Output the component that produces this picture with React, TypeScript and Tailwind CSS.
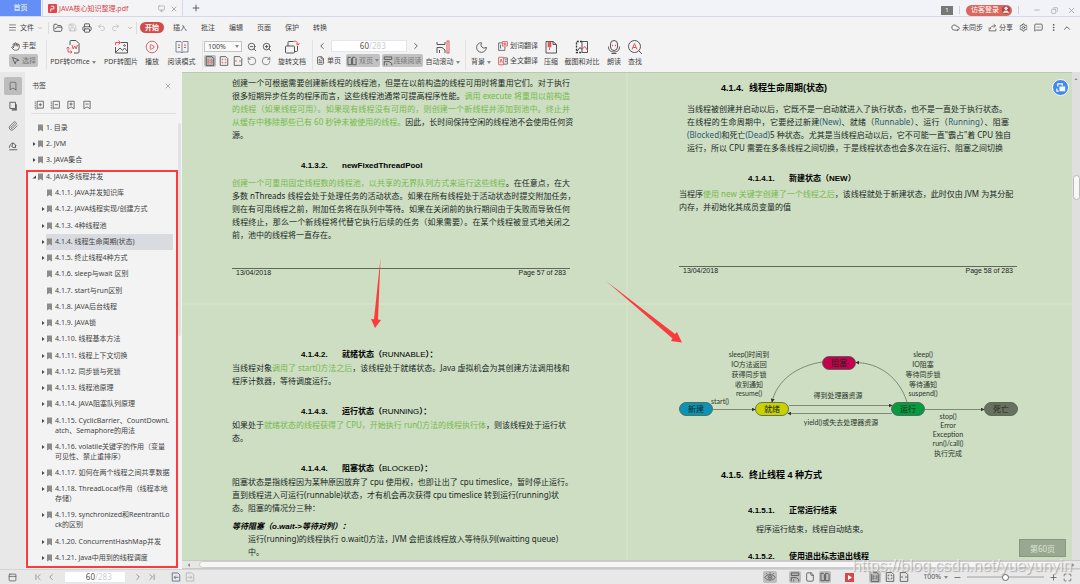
import { useState, type ReactNode } from 'react';
import {
  Bookmark,
  ChevronDown,
  ChevronFirst,
  ChevronLast,
  ChevronLeft,
  ChevronRight,
  ChevronUp,
  CirclePlay,
  Cloud,
  Copy,
  File,
  FileText,
  FolderOpen,
  Hand,
  Maximize,
  Menu,
  MessageSquareMore,
  Minus,
  Monitor,
  Moon,
  MoreVertical,
  MousePointer2,
  Paperclip,
  PanelTop,
  Plus,
  Printer,
  Redo2,
  RotateCcw,
  RotateCw,
  Save,
  Settings,
  Undo2,
  User,
  X,
  ZoomIn,
  ZoomOut,
} from 'lucide-react';
import clsx from 'clsx';

/* ---------- small drawings ---------- */

interface GlyphProps {
  className?: string;
  children: ReactNode;
}

function Glyph({ className = 'h-4 w-4', children }: GlyphProps) {
  return (
    <svg
      viewBox="0 0 16 16"
      className={clsx('shrink-0', className)}
      fill="none"
      stroke="#555"
      strokeWidth="1"
      aria-hidden="true"
    >
      {children}
    </svg>
  );
}

const RED = '#e0575b';

const PdfToOffice = () => (
  <Glyph>
    <path d="M5 6V2.500a1 1 0 0 1 1-1h5l3 3V13a1 1 0 0 1-1 1H9" />
    <path d="M7 6l1.200 4L9.700 7l1.500 3L12.400 6" stroke={RED} />
    <path d="M3 8v5h4M5.500 11.500L7 13l-1.500 1.500M1.500 9.500L3 8l1.500 1.500" stroke={RED} />
  </Glyph>
);

const PdfToImage = () => (
  <Glyph>
    <path d="M8 3.500h6.500V14h-12V8" />
    <path d="M3 13l4-4 2.500 2.500L11.500 9l3 3.500" />
    <circle cx="11.500" cy="6.500" r="0.800" />
    <path d="M2.500 6V3.500H7M5.500 1.500l2 2-2 2" stroke={RED} />
  </Glyph>
);

const ReadMode = () => (
  <Glyph>
    <path d="M2 2.500h5l1 1 1-1h5v10.500H9l-1 1-1-1H2zM8 3.500V14" stroke="#7886a0" />
    <path d="M4 6h2M4 8.500h2M10 6h2M10 8.500h2" stroke={RED} />
  </Glyph>
);

const RotateDoc = () => (
  <Glyph>
    <rect x="1.500" y="7" width="9" height="7" rx="1" />
    <path d="M4 7V3.500a1 1 0 0 1 1-1h4M13.500 7v4.500a1 1 0 0 1-1 1h-2" />
    <path d="M9 2.500c3-1 5 .5 5 3.500M12 4.500l2 1.800 1.500-2" stroke={RED} />
  </Glyph>
);

const AutoScroll = () => (
  <Glyph>
    <path d="M2 3v2.500h8V3M2 14V8.500h5l3 2.500v3M4.500 11v3" />
    <rect x="12" y="2" width="2" height="12" stroke={RED} />
  </Glyph>
);

const Compress = () => (
  <Glyph>
    <path d="M3 2.500h7l3.500 3V14H3z" />
    <path d="M10 2.500v3h3.500" />
    <rect x="5" y="3" width="3" height="5" fill={RED} stroke={RED} strokeWidth="0.600" />
    <path d="M6.500 8.500v2.500" stroke={RED} />
  </Glyph>
);

const Compare = () => (
  <Glyph>
    <path d="M8 2.500H2.500v11H8" strokeDasharray="2 1.200" strokeWidth="1.300" stroke="#333" />
    <path d="M8 2.500h5.500v11H8z" />
    <path d="M3 12l3-3.500 2 2" stroke="#333" />
    <path d="M8 10l3-2.500 2.500 4" stroke={RED} />
  </Glyph>
);

const ReadAloud = () => (
  <Glyph>
    <rect x="4.500" y="1.500" width="7" height="10" rx="3.500" />
    <path d="M2.500 7.500c0 4 2 5.500 5.500 5.500s5.500-1.500 5.500-5.500M5.500 14.500h5" />
    <path d="M6 6.500h1M9 6.500h1" stroke={RED} strokeWidth="1.400" />
  </Glyph>
);

const FindText = () => (
  <Glyph>
    <circle cx="7.500" cy="7.500" r="6" />
    <path d="M12 12l3 3" />
    <path d="M5 10.500l2.500-6 2.500 6M6 8.500h3" stroke={RED} />
  </Glyph>
);

const WordTranslate = () => (
  <Glyph className="h-[10px] w-[10px]">
    <path d="M7 3H1v12h10V9M4 6v6" strokeWidth="1.300" />
    <path d="M7 1h8v7H7zM9.500 3.500h3v2h-3z" stroke={RED} strokeWidth="1.400" />
  </Glyph>
);

const FullTranslate = () => (
  <Glyph className="h-[10px] w-[10px]">
    <path d="M9 3h6v10H9M11 6h3M11 9h3" strokeWidth="1.300" />
    <path d="M1 2h8v12H1zM3 11l2-6 2 6" stroke={RED} strokeWidth="1.400" />
  </Glyph>
);

const Continuous = () => (
  <Glyph className="h-[10px] w-[10px]">
    <path d="M2 1.500h12v4H2zM2 15V9h8l4 3v3M6 12v3" strokeWidth="1.500" />
  </Glyph>
);

const TwoPages = () => (
  <Glyph className="h-[10px] w-[10px]">
    <path d="M1.500 2H5l2 2v10H1.500zM9 2h3.500l2 2v10H9z" strokeWidth="1.500" />
  </Glyph>
);

const Pages = () => (
  <Glyph className="h-[10px] w-[10px]">
    <path d="M3 2h9v10H3z" strokeWidth="1.400" />
    <path d="M13 5v9H6" strokeWidth="2" />
  </Glyph>
);

const EyeCare = () => (
  <Glyph className="h-3 w-3">
    <path d="M1 8.500c3-5 11-5 14 0-3 5-11 5-14 0zM3 3l1.500 1.500M8 1.500v2M13 3l-1.500 1.500" />
    <circle cx="8" cy="8.500" r="2.500" />
    <circle cx="8" cy="8.500" r="0.800" />
  </Glyph>
);

const ShareArrow = () => (
  <Glyph className="h-[9px] w-[9px]">
    <path d="M2 8v6h12v-4M4 11c0-4 3-6 9-6M10 2l3.500 3L10 8" strokeWidth="1.400" />
  </Glyph>
);

function ViewArrow({ back }: { back?: boolean }) {
  return (
    <svg
      viewBox="0 0 16 16"
      className="h-[10px] w-[10px]"
      fill="none"
      stroke={back ? '#5f6d8c' : '#b4b4b4'}
      strokeWidth="1.400"
      aria-hidden="true"
    >
      <path d="M2 1.500h9l3 3v10H2z" />
      <path d={back ? 'M12 8.500H5M7.500 6L5 8.500 7.500 11' : 'M4 8.500h7M8.500 6L11 8.500 8.500 11'} />
    </svg>
  );
}

interface FitPageProps {
  kind: 'actual' | 'page' | 'width';
  accent?: string;
}

function FitPage({ kind, accent = '#555' }: FitPageProps) {
  return (
    <Glyph className="h-[10px] w-[10px]">
      <path d="M2 1h9l3 3v11H2z" strokeWidth="1.400" />
      {kind === 'actual' && <path d="M5 5v7M11 5v7M8 6v1.500M8 9.500V11" stroke={accent} strokeWidth="1.400" />}
      {kind === 'page' && <path d="M5 7V5h2M9 5h2v2M11 9v2H9M7 11H5V9" stroke={accent} strokeWidth="1.400" />}
      {kind === 'width' && <path d="M6 6L4 8l2 2M10 6l2 2-2 2" stroke={accent} strokeWidth="1.400" />}
    </Glyph>
  );
}

function BookmarkTool({ kind }: { kind: 'expand' | 'collapse' | 'add' | 'remove' }) {
  const tree = kind === 'expand' || kind === 'collapse';
  const plus = kind === 'expand' || kind === 'add';
  return (
    <Glyph className="h-[10px] w-[10px]">
      {tree ? (
        <>
          <path d="M5 2h10v11H5z" strokeWidth="1.300" />
          <path d="M2 2v12h4" strokeDasharray="2 1" strokeWidth="1.300" />
        </>
      ) : (
        <path d="M3 2h10v12l-5-3-5 3z" strokeWidth="1.300" />
      )}
      <path d={tree ? 'M7.500 7.500h5' : 'M5.500 6.500h5'} strokeWidth="1.300" />
      {plus && <path d={tree ? 'M10 5v5' : 'M8 4v5'} strokeWidth="1.300" />}
    </Glyph>
  );
}

const Caret = () => (
  <svg viewBox="0 0 4 3" className="h-[3px] w-1 shrink-0" fill="#888" aria-hidden="true">
    <path d="M0 0h4L2 3z" />
  </svg>
);

/* ---------- title bar and menu ---------- */

const menus = ['开始', '插入', '批注', '编辑', '页面', '保护', '转换'];

function TitleBar() {
  return (
    <header className="flex h-[17px] shrink-0 items-stretch border-b border-[#d3d9e8] bg-[#f2f3f8]">
      <button className="w-[41px] bg-[#6490f6] text-white">首页</button>
      <div className="ml-px flex w-[141px] items-center border-x border-[#d3d9e8] bg-[#f4f4f6] pt-px pr-1 pl-[5px]">
        <svg viewBox="0 0 10 10" className="mr-[2px] h-[9px] w-[9px]" aria-hidden="true">
          <rect width="10" height="10" rx="1" fill="#e0474c" />
          <path d="M3 8.500V5.500h3.500V2.500H3.500" stroke="#fff" fill="none" />
        </svg>
        <span className="flex-1 whitespace-nowrap text-[#d9444a]">JAVA核心知识整理.pdf</span>
        <Monitor className="h-[7px] w-[7px] text-[#999]" />
        <button aria-label="关闭标签" className="ml-[5px]">
          <X className="h-2 w-2 text-[#888]" />
        </button>
      </div>
      <button aria-label="新建标签" className="ml-2">
        <Plus className="h-[10px] w-[10px]" />
      </button>
      <div className="ml-auto flex items-center pt-[4px] pr-1 text-[#999]">
        <span className="h-[9px] w-3 bg-[#777] text-center text-[6px] leading-[9px] text-white">1</span>
        <span className="ml-[6px] h-2 w-px bg-[#d0d0d4]" />
        <button className="ml-[6px] flex h-[11px] items-center gap-[3px] rounded-full bg-[#d9685f] pr-[2px] pl-[5px] text-white">
          访客登录
          <User className="h-2 w-2 rounded-full bg-[#a84646]" fill="#f0cfcf" />
        </button>
        <span className="ml-[6px] h-2 w-px bg-[#d0d0d4]" />
        <button aria-label="最小化" className="ml-[14px]">
          <Minus className="h-2 w-2" />
        </button>
        <button aria-label="还原" className="ml-[10px]">
          <Copy className="h-[7px] w-[7px] -scale-x-100" />
        </button>
        <button aria-label="关闭" className="ml-[9px]">
          <X className="h-[9px] w-[9px]" />
        </button>
      </div>
    </header>
  );
}

function MenuBar() {
  return (
    <nav className="flex h-[21px] shrink-0 items-center pr-2 pl-2">
      <button className="flex w-[37px] items-center gap-[3px]">
        <Menu className="h-[9px] w-[9px] text-[#666]" />
        文件
        <ChevronDown className="h-[6px] w-[6px] text-[#888]" />
      </button>
      <span className="ml-[3px] h-3 w-px bg-[#dcdcdc]" />
      <div className="ml-[4px] flex items-center gap-[5px]">
        <button aria-label="打开"><FolderOpen className="h-[10px] w-[10px]" /></button>
        <button aria-label="保存"><Save className="h-[9px] w-[9px] text-[#bbb]" /></button>
        <button aria-label="打印"><Printer className="h-[10px] w-[10px]" /></button>
        <button aria-label="撤销"><Undo2 className="h-[9px] w-[9px] text-[#bbb]" /></button>
        <button aria-label="重做"><Redo2 className="h-[9px] w-[9px] text-[#bbb]" /></button>
        <button aria-label="更多" className="pl-[2px]"><ChevronDown className="h-[6px] w-[6px] text-[#777]" /></button>
      </div>
      <span className="ml-[3px] h-3 w-px bg-[#dcdcdc]" />
      <div className="ml-px flex">
        {menus.map((name, i) => (
          <button key={name} className="flex w-7 justify-center">
            {i === 0 ? (
              <span className="rounded-full bg-[#d34a4a] px-[5px] leading-[11px] font-bold text-white">{name}</span>
            ) : (
              <span className="leading-[11px]">{name}</span>
            )}
          </button>
        ))}
      </div>
      <div className="ml-auto flex items-center">
        <button className="flex items-center gap-[2px]"><Cloud className="h-[9px] w-[9px]" />未同步</button>
        <button className="ml-[5px] flex items-center gap-[2px]"><ShareArrow />分享</button>
        <button aria-label="设置" className="ml-[6px]"><Settings className="h-[9px] w-[9px]" /></button>
        <button aria-label="反馈" className="ml-[6px]"><MessageSquareMore className="h-[9px] w-[9px]" /></button>
        <button aria-label="更多选项" className="ml-[6px]"><MoreVertical className="h-[9px] w-[9px]" /></button>
        <button aria-label="收起功能区" className="ml-[4px]"><ChevronUp className="h-[10px] w-[10px]" /></button>
      </div>
    </nav>
  );
}

/* ---------- toolbar ---------- */

interface ToolProps {
  icon: ReactNode;
  label: string;
  width: string;
  caret?: boolean;
}

function Tool({ icon, label, width, caret }: ToolProps) {
  return (
    <button className={clsx('flex shrink-0 flex-col items-center gap-[2px] pt-px whitespace-nowrap', width)}>
      <span className="flex h-4 items-center">{icon}</span>
      <span className="flex items-center gap-[2px] leading-[10px]">
        {label}
        {caret && <Caret />}
      </span>
    </button>
  );
}

const Divider = () => <span className="h-[30px] w-px shrink-0 self-center bg-[#e2e2e2]" />;

function PageNumber({ id, className }: { id: string; className: string }) {
  const [page, setPage] = useState('60');
  return (
    <label htmlFor={id} className={clsx('flex items-center border border-[#e4e6ec] bg-white text-[8px]', className)}>
      <input
        id={id}
        aria-label="页码"
        value={page}
        onChange={(e) => setPage(e.target.value)}
        className="w-0 flex-1 text-right text-[#555] outline-none"
      />
      <span className="flex-1 text-[#ccc]">/283</span>
    </label>
  );
}

function Toolbar() {
  return (
    <div className="flex h-[34px] shrink-0 items-start pl-[9px] text-[#444]">
      <div className="flex w-[29px] shrink-0 flex-col gap-[2px] pt-[2px]">
        <button className="flex h-3 items-center gap-[2px] pl-[2px] whitespace-nowrap"><Hand className="h-[9px] w-[9px]" />手型</button>
        <button className="flex h-[13px] items-center gap-[2px] rounded-xs bg-[#c2c2c2] pl-[2px] whitespace-nowrap text-[#777]">
          <MousePointer2 className="h-[9px] w-[9px] text-[#444]" />选择
        </button>
      </div>
      <span className="w-2 shrink-0" />
      <Divider />
      <Tool width="w-[52px]" icon={<PdfToOffice />} label="PDF转Office" caret />
      <Tool width="w-11" icon={<PdfToImage />} label="PDF转图片" />
      <Tool width="w-[18px]" icon={<CirclePlay className="h-[14px] w-[14px] text-[#c85a5e]" strokeWidth={1.5} />} label="播放" />
      <Tool width="w-[41px]" icon={<ReadMode />} label="阅读模式" />
      <Divider />
      <div className="flex w-[69px] shrink-0 flex-col gap-[3px] pt-[3px] pl-px">
        <div className="flex items-center gap-[5px]">
          <span className="relative flex h-[11px] w-[39px] items-center border border-[#c4c4c4] bg-[#fafafa]">
            <select aria-label="缩放比例" className="w-full appearance-none pl-[3px] text-[7px] leading-[9px] outline-none" defaultValue="100%">
              <option>100%</option>
              <option>150%</option>
            </select>
            <span className="absolute right-[2px]"><Caret /></span>
          </span>
          <button aria-label="缩小"><ZoomOut className="h-[10px] w-[10px]" /></button>
          <button aria-label="放大"><ZoomIn className="h-[10px] w-[10px]" /></button>
        </div>
        <div className="flex items-center gap-[2px]">
          <button aria-label="实际大小" className="rounded-xs bg-[#bdbdbd] p-px"><FitPage kind="actual" accent={RED} /></button>
          <button aria-label="适合页面" className="p-px"><FitPage kind="page" accent={RED} /></button>
          <button aria-label="适合宽度" className="p-px"><FitPage kind="width" accent={RED} /></button>
          <button aria-label="左转" className="p-px"><RotateCcw className="h-[10px] w-[10px] text-[#777]" /></button>
          <button aria-label="右转" className="p-px"><RotateCw className="h-[10px] w-[10px] text-[#777]" /></button>
        </div>
      </div>
      <Tool width="w-10" icon={<RotateDoc />} label="旋转文档" />
      <Divider />
      <div className="flex w-[110px] shrink-0 flex-col gap-[2px] pt-[2px]">
        <div className="flex items-center justify-between pr-[2px] pl-[4px]">
          <button aria-label="上一页"><ChevronLeft className="h-[10px] w-[10px]" /></button>
          <PageNumber id="page-top" className="h-3 w-[76px]" />
          <button aria-label="下一页"><ChevronRight className="h-[10px] w-[10px]" /></button>
        </div>
        <div className="flex items-center gap-[2px] whitespace-nowrap">
          <button className="flex h-[13px] items-center gap-[2px] px-[3px]"><FileText className="h-[9px] w-[9px]" />单页</button>
          <button className="flex h-[13px] w-[34px] items-center gap-[2px] rounded-xs bg-[#c2c2c2] pl-[1px] text-[#777]"><TwoPages />双页<Caret /></button>
          <button className="flex h-[13px] w-[42px] items-center gap-[1px] rounded-xs bg-[#c2c2c2] pl-[1px] text-[#777]"><Continuous />连续阅读</button>
        </div>
      </div>
      <Tool width="w-[39px]" icon={<AutoScroll />} label="自动滚动" caret />
      <span className="w-[3px] shrink-0" />
      <Divider />
      <Tool width="w-[30px]" icon={<Moon className="h-[13px] w-[13px]" strokeWidth={1.5} />} label="背景" caret />
      <div className="flex w-[43px] shrink-0 flex-col gap-1 pt-[3px] pl-[2px] whitespace-nowrap">
        <button className="flex h-[10px] items-center gap-[2px]"><WordTranslate />划词翻译</button>
        <button className="flex h-[11px] items-center gap-[2px]"><FullTranslate />全文翻译</button>
      </div>
      <Tool width="w-6" icon={<Compress />} label="压缩" />
      <Tool width="w-[38px]" icon={<Compare />} label="截图和对比" />
      <Tool width="w-[26px]" icon={<ReadAloud />} label="朗读" />
      <Tool width="w-4" icon={<FindText />} label="查找" />
    </div>
  );
}

/* ---------- bookmarks panel ---------- */

interface Entry {
  lines: string[];
  state?: 'closed' | 'open';
  active?: boolean;
}

const chapters: Entry[] = [
  { lines: ['1. 目录'] },
  { lines: ['2. JVM'], state: 'closed' },
  { lines: ['3. JAVA集合'], state: 'closed' },
];

const sections: Entry[] = [
  { lines: ['4.1.1. JAVA并发知识库'] },
  { lines: ['4.1.2. JAVA线程实现/创建方式'], state: 'closed' },
  { lines: ['4.1.3. 4种线程池'], state: 'closed' },
  { lines: ['4.1.4. 线程生命周期(状态)'], state: 'closed', active: true },
  { lines: ['4.1.5. 终止线程4种方式'], state: 'closed' },
  { lines: ['4.1.6. sleep与wait 区别'] },
  { lines: ['4.1.7. start与run区别'] },
  { lines: ['4.1.8. JAVA后台线程'] },
  { lines: ['4.1.9. JAVA锁'], state: 'closed' },
  { lines: ['4.1.10. 线程基本方法'], state: 'closed' },
  { lines: ['4.1.11. 线程上下文切换'], state: 'closed' },
  { lines: ['4.1.12. 同步锁与死锁'], state: 'closed' },
  { lines: ['4.1.13. 线程池原理'], state: 'closed' },
  { lines: ['4.1.14. JAVA阻塞队列原理'], state: 'closed' },
  { lines: ['4.1.15. CyclicBarrier、CountDownL', 'atch、Semaphore的用法'], state: 'closed' },
  { lines: ['4.1.16. volatile关键字的作用（变量', '可见性、禁止重排序）'], state: 'closed' },
  { lines: ['4.1.17. 如何在两个线程之间共享数据'], state: 'closed' },
  { lines: ['4.1.18. ThreadLocal作用（线程本地', '存储）'], state: 'closed' },
  { lines: ['4.1.19. synchronized和ReentrantLo', 'ck的区别'], state: 'closed' },
  { lines: ['4.1.20. ConcurrentHashMap并发'], state: 'closed' },
  { lines: ['4.1.21. Java中用到的线程调度'], state: 'closed' },
];

function TreeItem({ entry, indent }: { entry: Entry; indent: string }) {
  return (
    <li className={clsx('flex items-start leading-[10px]', indent)}>
      <svg viewBox="0 0 5 10" className="h-[10px] w-[5px] shrink-0" fill="#444" aria-hidden="true">
        {entry.state === 'closed' && <path d="M1 3L3.500 5 1 7z" />}
        {entry.state === 'open' && <path d="M4 3.500v3H0.500z" />}
      </svg>
      <a
        href="#"
        className={clsx(
          'mr-[3px] flex flex-1 gap-[3px] pl-px',
          entry.active && '-my-[3px] bg-[#d9dbe1] py-[3px]',
        )}
      >
        <svg viewBox="0 0 5 10" className="h-[10px] w-[5px] shrink-0" fill="#8c8c8c" aria-hidden="true">
          <path d="M0 1.500h5v7L2.500 7 0 8.500z" />
        </svg>
        <span>
          {entry.lines.map((line) => (
            <span key={line} className="block whitespace-nowrap">{line}</span>
          ))}
        </span>
      </a>
    </li>
  );
}

function Rail() {
  return (
    <aside className="flex w-[25px] shrink-0 flex-col items-center gap-[2px] bg-[#e8e8e8] pt-[5px] text-[#666]">
      <button aria-label="书签" className="flex h-[18px] w-[18px] items-center justify-center rounded-xs bg-[#bdbdbd]"><Bookmark className="h-[10px] w-[10px]" /></button>
      <button aria-label="缩略图" className="flex h-[18px] w-[18px] items-center justify-center"><Pages /></button>
      <button aria-label="附件" className="flex h-[18px] w-[18px] items-center justify-center"><Paperclip className="h-[10px] w-[10px]" /></button>
      <button aria-label="签名" className="flex h-[18px] w-[18px] items-center justify-center">
        <Glyph className="h-[10px] w-[10px]">
          <path d="M2 14h13M2 11c1-4 2-7 6-8l4 3v5M8 3L6 9l4 2 3-4" strokeWidth="1.400" />
        </Glyph>
      </button>
    </aside>
  );
}

function BookmarksPanel() {
  return (
    <section className="flex w-[157px] shrink-0 flex-col bg-[#f3f3f3] text-[#444]">
      <div className="flex items-center justify-between pt-[9px] pr-[10px] pl-[7px]">
        <h2 className="leading-[10px]">书签</h2>
        <button aria-label="关闭书签"><X className="h-2 w-2 text-[#888]" /></button>
      </div>
      <div className="mx-[6px] flex gap-[6px] border-b border-[#e0e0e0] pt-[9px] pb-[3px] pl-[3px]">
        <button aria-label="全部展开"><BookmarkTool kind="expand" /></button>
        <button aria-label="全部折叠"><BookmarkTool kind="collapse" /></button>
        <button aria-label="添加书签"><BookmarkTool kind="add" /></button>
        <button aria-label="删除书签"><BookmarkTool kind="remove" /></button>
      </div>
      <div className="relative flex flex-1 flex-col pt-[9px] pb-px">
        <ul className="flex flex-col gap-[6px] pb-[5px]">
          {chapters.map((entry) => (
            <TreeItem key={entry.lines[0]} entry={entry} indent="pl-[7px]" />
          ))}
        </ul>
        <ul className="mr-1 ml-px flex flex-1 flex-col justify-between border-2 border-[#fb3c3c] pb-[3px]">
          <TreeItem entry={{ lines: ['4. JAVA多线程并发'], state: 'open' }} indent="pl-1" />
          {sections.map((entry) => (
            <TreeItem key={entry.lines[0]} entry={entry} indent="pl-[13px]" />
          ))}
        </ul>
        <span className="absolute top-[9px] right-px h-[213px] w-[3px] rounded-full bg-[#e0e2e7]" />
      </div>
    </section>
  );
}

/* ---------- document ---------- */

interface TextProps {
  children: ReactNode;
}

/* One full line of a justified paragraph */
const Full = ({ children }: TextProps) => (
  <span className="block whitespace-nowrap [text-align-last:justify]">{children}</span>
);
const Line = ({ children }: TextProps) => <span className="block whitespace-nowrap">{children}</span>;
const G = ({ children }: TextProps) => <span className="text-[#76b94b]">{children}</span>;
const B = ({ children }: TextProps) => <span className="text-[#2f5876]">{children}</span>;

interface HeadingProps {
  no: string;
  className: string;
  children: ReactNode;
}

function Heading({ no, className, children }: HeadingProps) {
  return (
    <h4
      className={clsx(
        "flex pb-[2px] pl-[69px] text-[8px] leading-[9px] font-bold whitespace-nowrap text-black font-['Liberation_Sans','Noto_Sans_CJK_SC',sans-serif]",
        className,
      )}
    >
      <span className="w-[41px]">{no}</span>
      <span>{children}</span>
    </h4>
  );
}

function PageFooter({ page, className }: { page: number; className: string }) {
  return (
    <footer
      className={clsx(
        "flex justify-between border-t border-[#5d6a58] px-1 text-[7px] leading-[8px] text-[#222] font-['Liberation_Sans',sans-serif]",
        className,
      )}
    >
      <span>13/04/2018</span>
      <span>Page {page} of 283</span>
    </footer>
  );
}

function Page57() {
  return (
    <article className="bg-[#cddec3] pl-[50px]">
      <div className="w-[338px] pt-[3px]">
        <p>
          <Full>创建一个可根据需要创建新线程的线程池，但是在以前构造的线程可用时将重用它们。对于执行</Full>
          <Full>很多短期异步任务的程序而言，这些线程池通常可提高程序性能。<G>调用 execute 将重用以前构造</G></Full>
          <Full><G>的线程（如果线程可用）。如果现有线程没有可用的，则创建一个新线程并添加到池中。终止并</G></Full>
          <Full><G>从缓存中移除那些已有 60 秒钟未被使用的线程。</G>因此，长时间保持空闲的线程池不会使用任何资</Full>
          <Line>源。</Line>
        </p>
        <Heading no="4.1.3.2." className="mt-5">newFixedThreadPool</Heading>
        <p className="mt-1">
          <Full><G>创建一个可重用固定线程数的线程池，以共享的无界队列方式来运行这些线程</G>。在任意点，在大</Full>
          <Full>多数 nThreads 线程会处于处理任务的活动状态。如果在所有线程处于活动状态时提交附加任务，</Full>
          <Full>则在有可用线程之前，附加任务将在队列中等待。如果在关闭前的执行期间由于失败而导致任何</Full>
          <Full>线程终止，那么一个新线程将代替它执行后续的任务（如果需要）。在某个线程被显式地关闭之</Full>
          <Line>前，池中的线程将一直存在。</Line>
        </p>
        <PageFooter page={57} className="mt-[27px]" />
      </div>
    </article>
  );
}

function Page58() {
  return (
    <article className="bg-[#cddec3] pl-[51px]">
      <div className="w-[338px] pt-[9px]">
        <h3 className="flex pl-[42px] text-[9px] leading-[13px] font-bold whitespace-nowrap text-black font-['Liberation_Sans','Noto_Sans_CJK_SC',sans-serif]">
          <span className="w-7">4.1.4.</span>线程生命周期(状态)
        </h3>
        <p className="mt-[7px] mr-2 ml-2">
          <Line>当线程被创建并启动以后，它既不是一启动就进入了执行状态，也不是一直处于执行状态。</Line>
          <Full>在线程的生命周期中，它要经过新建<B>(New)</B>、就绪（<B>Runnable</B>）、运行（<B>Running</B>）、阻塞</Full>
          <Full><B>(Blocked)</B>和死亡<B>(Dead)</B>5 种状态。尤其是当线程启动以后，它不可能一直"霸占"着 CPU 独自</Full>
          <Line>运行，所以 CPU 需要在多条线程之间切换，于是线程状态也会多次在运行、阻塞之间切换</Line>
        </p>
        <Heading no="4.1.4.1." className="mt-5">新建状态（NEW）</Heading>
        <p className="pt-[2px]">
          <Line>当程序<G>使用 new 关键字创建了一个线程之后</G>，该线程就处于新建状态，此时仅由 JVM 为其分配</Line>
          <Line>内存，并初始化其成员变量的值</Line>
        </p>
        <PageFooter page={58} className="mt-[53px]" />
      </div>
    </article>
  );
}

function Page59() {
  return (
    <article className="bg-[#cddec3] pl-[50px]">
      <div className="w-[338px] pt-[45px]">
        <Heading no="4.1.4.2." className="">就绪状态（<span className="font-normal">RUNNABLE</span>）：</Heading>
        <p>
          <Line>当线程对象<G>调用了 start()方法之后</G>，该线程处于就绪状态。Java 虚拟机会为其创建方法调用栈和</Line>
          <Line>程序计数器，等待调度运行。</Line>
        </p>
        <Heading no="4.1.4.3." className="mt-5">运行状态（<span className="font-normal">RUNNING</span>）：</Heading>
        <p>
          <Line>如果处于<G>就绪状态的线程获得了 CPU，开始执行 run()方法的线程执行体</G>，则该线程处于运行状</Line>
          <Line>态。</Line>
        </p>
        <Heading no="4.1.4.4." className="mt-5">阻塞状态（<span className="font-normal">BLOCKED</span>）：</Heading>
        <p>
          <Line>阻塞状态是指线程因为某种原因放弃了 cpu 使用权，也即让出了 cpu timeslice，暂时停止运行。</Line>
          <Line>直到线程进入可运行(runnable)状态，才有机会再次获得 cpu timeslice 转到运行(running)状</Line>
          <Line>态。阻塞的情况分三种：</Line>
        </p>
        <p className="mt-[7px] leading-[11px] font-bold text-black italic font-['Liberation_Sans','Noto_Sans_CJK_SC',sans-serif]">
          等待阻塞（o.wait-&gt;等待对列）：
        </p>
        <p className="pl-4">
          <Line>运行(running)的线程执行 o.wait()方法，JVM 会把该线程放入等待队列(waitting queue)</Line>
          <Line>中。</Line>
        </p>
      </div>
    </article>
  );
}

const nodes = [
  { label: '新建', x: 0, y: 57, fill: '#0b94b3' },
  { label: '就绪', x: 76, y: 57, fill: '#c9d200' },
  { label: '阻塞', x: 143, y: 11, fill: '#c4004f' },
  { label: '运行', x: 212, y: 57, fill: '#069a41' },
  { label: '死亡', x: 305, y: 57, fill: '#68715f' },
];

const notes = [
  { x: 41, y: 59, text: 'start()' },
  { x: 70, y: 12, text: 'sleep()时间到' },
  { x: 70, y: 22, text: 'IO方法返回' },
  { x: 70, y: 32, text: '获得同步锁' },
  { x: 70, y: 42, text: '收到通知' },
  { x: 70, y: 51, text: 'resume()' },
  { x: 244, y: 12, text: 'sleep()' },
  { x: 244, y: 22, text: 'IO阻塞' },
  { x: 244, y: 32, text: '等待同步锁' },
  { x: 244, y: 42, text: '等待通知' },
  { x: 244, y: 51, text: 'suspend()' },
  { x: 159, y: 53, text: '得到处理器资源' },
  { x: 162, y: 80, text: 'yield()或失去处理器资源' },
  { x: 269, y: 74, text: 'stop()' },
  { x: 269, y: 83, text: 'Error' },
  { x: 269, y: 92, text: 'Exception' },
  { x: 269, y: 101, text: 'run()/call()' },
  { x: 269, y: 111, text: '执行完成' },
];

function StateDiagram() {
  return (
    <svg
      viewBox="0 0 340 118"
      className="block h-[118px] w-[340px] font-['Lato','Noto_Sans_CJK_SC',sans-serif]"
      role="img"
      aria-label="线程状态图"
    >
      <defs>
        <marker id="tip" viewBox="0 0 6 6" refX="5" refY="3" markerWidth="4" markerHeight="4" markerUnits="userSpaceOnUse" orient="auto">
          <path d="M0 0l6 3-6 3z" fill="#333" />
        </marker>
      </defs>
      <g fill="none" stroke="#5c6657" strokeWidth="0.700">
        <path d="M34 64.500H76" markerEnd="url(#tip)" />
        <path d="M110 60.500H213" markerEnd="url(#tip)" />
        <path d="M213 68.500H109" markerEnd="url(#tip)" />
        <path d="M246 64.500H305" markerEnd="url(#tip)" />
        <path d="M143 17C118 21 98 35 93 57" markerEnd="url(#tip)" />
        <path d="M228 57C220 32 200 18 177 17.500" markerEnd="url(#tip)" />
      </g>
      {nodes.map((n) => (
        <g key={n.label}>
          <rect x={n.x + 0.5} y={n.y + 0.5} width="33" height="13" rx="6.500" fill={n.fill} stroke="#4c5a4c" strokeWidth="0.800" />
          <text x={n.x + 17} y={n.y + 10} fontSize="8" textAnchor="middle" fill="#1c2a1c">{n.label}</text>
        </g>
      ))}
      {notes.map((n) => (
        <text key={`${n.x}-${n.y}`} x={n.x} y={n.y} fontSize="7" textAnchor="middle" fill="#2c352a">{n.text}</text>
      ))}
    </svg>
  );
}

function Page60() {
  return (
    <article className="bg-[#cddec3] pl-[51px]">
      <div className="w-[340px] pt-10">
        <StateDiagram />
        <h3 className="mt-[6px] flex pl-[42px] text-[9px] leading-[13px] font-bold whitespace-nowrap text-black font-['Liberation_Sans','Noto_Sans_CJK_SC',sans-serif]">
          <span className="w-7">4.1.5.</span>终止线程 4 种方式
        </h3>
        <Heading no="4.1.5.1." className="mt-6">正常运行结束</Heading>
        <p className="mt-[5px] pl-[77px]">程序运行结束，线程自动结束。</p>
        <Heading no="4.1.5.2." className="mt-[17px]">使用退出标志退出线程</Heading>
      </div>
    </article>
  );
}

function DocumentView() {
  return (
    <main className="relative flex min-w-0 flex-1 flex-col">
      <div className="flex min-h-0 flex-1">
        <div className="relative grid min-w-0 flex-1 grid-cols-2 grid-rows-[230px_1fr] gap-[2px] overflow-hidden border-t border-[#b9c8b0] bg-[#d3e3ca] text-[8px] leading-[13px] text-[#20281e]">
          <Page57 />
          <Page58 />
          <Page59 />
          <Page60 />
          {/* Hand-drawn pointers across the pages */}
          <svg className="pointer-events-none absolute top-0 left-0 h-full w-full" fill="#fb3c3c" aria-hidden="true">
            <path d="M198.500 185L196 246.500l3 .5-6 8-4-9 3 .3z" />
            <path d="M424 208l69 53 2-2 5 10.500-11-1.500 1.500-2.500z" />
          </svg>
          <button aria-label="翻译" className="absolute top-[6px] right-[3px] flex h-[17px] w-[17px] items-center justify-center rounded-full border border-white bg-[#4088f2]">
            <svg viewBox="0 0 12 12" className="h-[11px] w-[11px]" fill="none" stroke="#fff" strokeWidth="1.300" aria-hidden="true">
              <path d="M3 5V2h5v2M2 7v3h2" />
              <rect x="5.500" y="5.500" width="5" height="4" fill="#fff" />
            </svg>
          </button>
          <span className="absolute right-[6px] bottom-[3px] flex h-[18px] w-[47px] items-center justify-center border border-[#87967f] bg-[#9aa892] text-[#dbe6d4]">
            第60页
          </span>
        </div>
        <div className="flex w-2 shrink-0 flex-col items-center bg-[#dfdfdf]">
          <svg viewBox="0 0 8 8" className="mt-[3px] h-2 w-2" fill="#888" aria-hidden="true"><path d="M2.500 5h3L4 3z" /></svg>
          <span className="mt-[92px] h-[25px] w-[7px] rounded-sm border border-[#bbb] bg-[#f8f8f8]" />
        </div>
      </div>
      <div className="flex h-[9px] shrink-0 items-center border-y border-[#c9c9c9] bg-[#e6e6e6] px-1">
        <svg viewBox="0 0 8 8" className="h-[6px] w-[6px]" fill="#777" aria-hidden="true"><path d="M5 1.500v5L2.500 4z" /></svg>
        <span className="mx-[7px] h-[7px] flex-1 rounded-full border border-[#ccc] bg-[#f6f6f6]" />
        <svg viewBox="0 0 8 8" className="h-[6px] w-[6px]" fill="#777" aria-hidden="true"><path d="M3 1.500v5L5.500 4z" /></svg>
      </div>
      <span className="pointer-events-none absolute right-2 -bottom-[5px] z-10 text-base leading-4 whitespace-nowrap text-white/60 [text-shadow:1px_1px_1px_#a8a8a8] font-['Liberation_Sans',sans-serif]">
        https://blog.csdn.net/yueyunyin
      </span>
    </main>
  );
}

function StatusBar() {
  const [zoom, setZoom] = useState(50);
  return (
    <footer className="flex h-[15px] shrink-0 items-center border-t border-[#d4d4d4] bg-[#e8e8e8] pr-2 pl-2 text-[#555]">
      <button aria-label="面板"><PanelTop className="h-[9px] w-[9px]" /></button>
      <div className="ml-4 flex items-center text-[#888]">
        <button aria-label="首页"><ChevronFirst className="h-[10px] w-[10px]" /></button>
        <button aria-label="上一页" className="ml-[3px]"><ChevronLeft className="h-[10px] w-[10px]" /></button>
        <PageNumber id="page-bottom" className="ml-2 h-3 w-[62px]" />
        <button aria-label="下一页" className="ml-[7px]"><ChevronRight className="h-[10px] w-[10px]" /></button>
        <button aria-label="末页" className="ml-1"><ChevronLast className="h-[10px] w-[10px]" /></button>
      </div>
      <button aria-label="后退视图" className="ml-[14px]"><ViewArrow back /></button>
      <button aria-label="前进视图" className="ml-1"><ViewArrow /></button>
      <div className="ml-auto flex items-center">
        <button aria-label="护眼模式" className="mr-3 rounded-xs bg-[#bdbdbd] px-px"><EyeCare /></button>
        <button aria-label="连续" className="rounded-xs bg-[#bdbdbd] p-px"><Continuous /></button>
        <button aria-label="单页" className="ml-1"><File className="h-[10px] w-[10px]" /></button>
        <button aria-label="双页" className="ml-1 rounded-xs bg-[#bdbdbd] p-px"><TwoPages /></button>
        <button aria-label="播放" className="mr-[15px] ml-[14px] h-[9px] w-[9px] bg-[#d8474b]">
          <svg viewBox="0 0 9 9" fill="#fff" aria-hidden="true"><path d="M3 2l4 2.500L3 7z" /></svg>
        </button>
        <button aria-label="原始大小" className="rounded-xs bg-[#bdbdbd] p-px"><FitPage kind="actual" /></button>
        <button aria-label="整页" className="ml-1"><FitPage kind="page" /></button>
        <button aria-label="页宽" className="ml-1"><FitPage kind="width" /></button>
        <button className="ml-[14px] flex items-center gap-[3px]">100%<Caret /></button>
        <button aria-label="缩小" className="ml-[5px]"><Minus className="h-[9px] w-[9px]" /></button>
        <input
          type="range"
          aria-label="缩放"
          value={zoom}
          onChange={(e) => setZoom(Number(e.target.value))}
          className="mx-[5px] h-[2px] w-[77px] appearance-none bg-[#c4c4c4] [&::-webkit-slider-thumb]:h-[7px] [&::-webkit-slider-thumb]:w-[7px] [&::-webkit-slider-thumb]:appearance-none [&::-webkit-slider-thumb]:rounded-full [&::-webkit-slider-thumb]:border [&::-webkit-slider-thumb]:border-[#666] [&::-webkit-slider-thumb]:bg-white"
        />
        <button aria-label="放大"><Plus className="h-[9px] w-[9px]" /></button>
        <button aria-label="全屏" className="ml-[5px]"><Maximize className="h-[9px] w-[9px]" /></button>
      </div>
    </footer>
  );
}

export default function App() {
  return (
    <div
      lang="zh-CN"
      className="flex h-screen flex-col overflow-hidden bg-[#f3f3f3] text-[7px] leading-[10px] text-[#444] font-['Noto_Sans','Noto_Sans_CJK_SC',sans-serif]"
    >
      <TitleBar />
      <MenuBar />
      <Toolbar />
      <div className="flex min-h-0 flex-1">
        <Rail />
        <BookmarksPanel />
        <DocumentView />
      </div>
      <StatusBar />
    </div>
  );
}
